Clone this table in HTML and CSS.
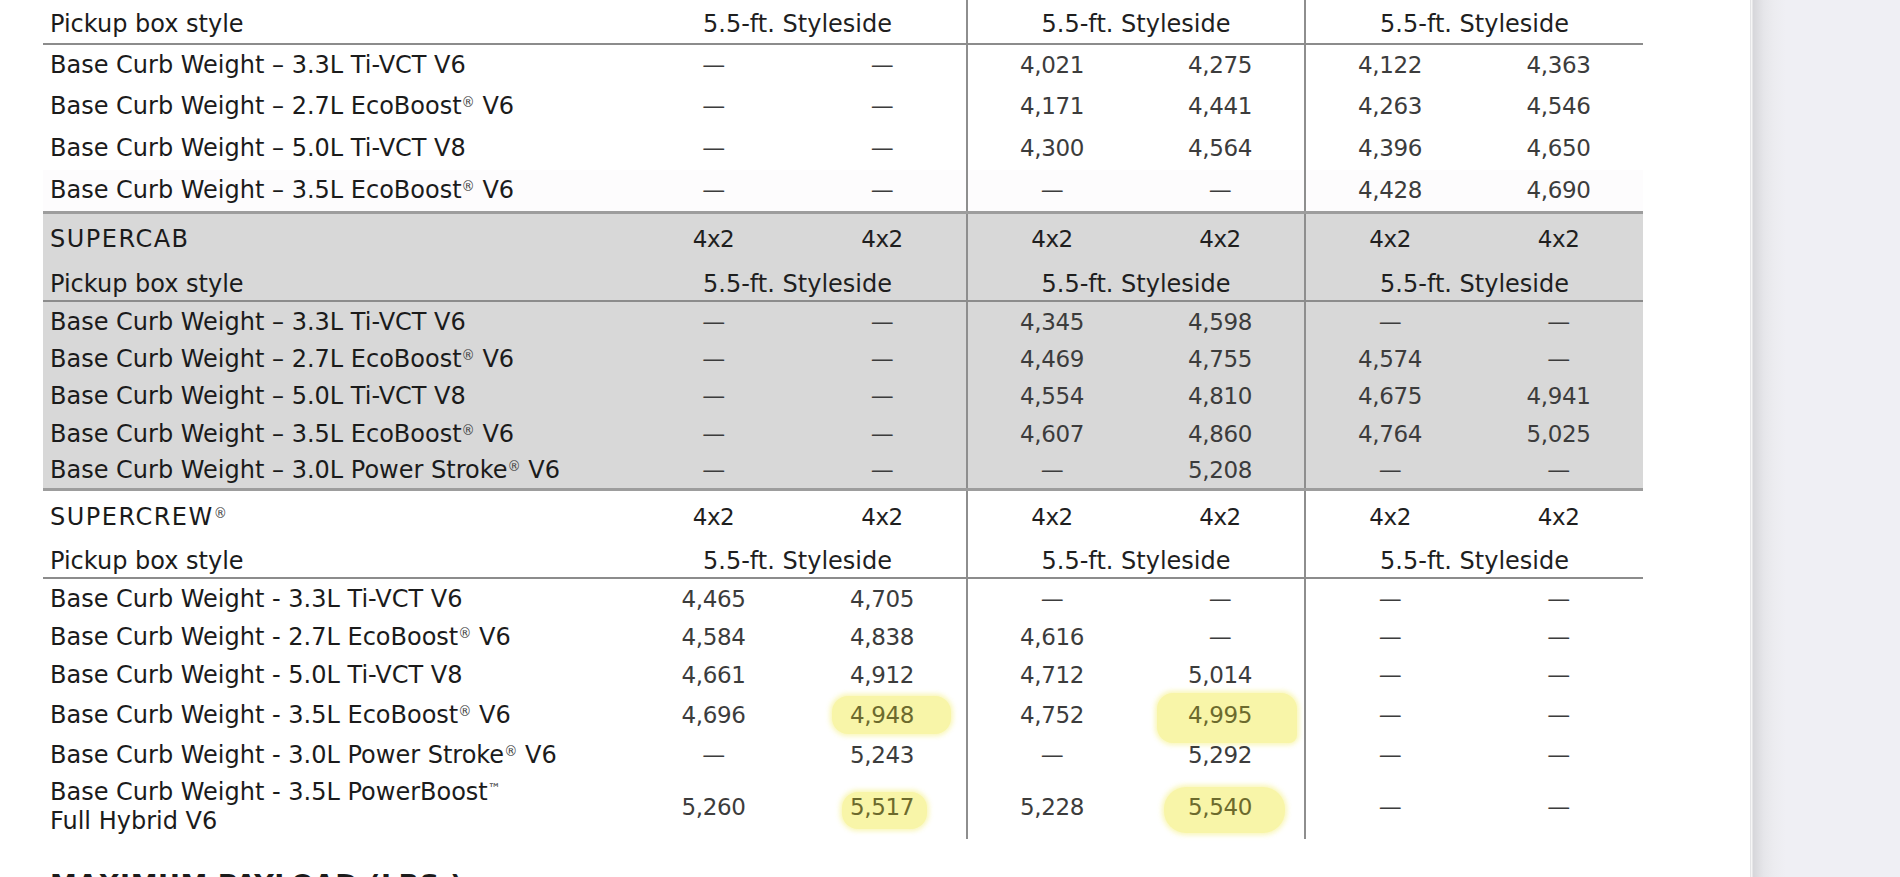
FILE: index.html
```html
<!DOCTYPE html>
<html lang="en">
<head>
<meta charset="utf-8">
<title>Curb Weight</title>
<link rel="stylesheet" href="styles.css">
</head>
<body>
<div class="page">
  <main class="doc">
    <table class="spec">
      <colgroup>
        <col class="c-lab">
        <col class="c-val"><col class="c-val"><col class="c-val"><col class="c-val"><col class="c-val"><col class="c-val">
      </colgroup>
      <tbody class="sec">
        <tr class="pickup top h44">
          <td class="l">Pickup box style</td>
          <td class="n" colspan="2">5.5-ft. Styleside</td>
          <td class="n g" colspan="2">5.5-ft. Styleside</td>
          <td class="n g" colspan="2">5.5-ft. Styleside</td>
        </tr>
        <tr class="h41">
          <td class="l">Base Curb Weight – 3.3L Ti-VCT V6</td>
          <td class="n">—</td><td class="n">—</td>
          <td class="n g">4,021</td><td class="n">4,275</td>
          <td class="n g">4,122</td><td class="n">4,363</td>
        </tr>
        <tr class="h42">
          <td class="l">Base Curb Weight – 2.7L EcoBoost<sup>®</sup> V6</td>
          <td class="n">—</td><td class="n">—</td>
          <td class="n g">4,171</td><td class="n">4,441</td>
          <td class="n g">4,263</td><td class="n">4,546</td>
        </tr>
        <tr class="h43">
          <td class="l">Base Curb Weight – 5.0L Ti-VCT V8</td>
          <td class="n">—</td><td class="n">—</td>
          <td class="n g">4,300</td><td class="n">4,564</td>
          <td class="n g">4,396</td><td class="n">4,650</td>
        </tr>
        <tr class="h42 tint">
          <td class="l">Base Curb Weight – 3.5L EcoBoost<sup>®</sup> V6</td>
          <td class="n">—</td><td class="n">—</td>
          <td class="n g">—</td><td class="n">—</td>
          <td class="n g">4,428</td><td class="n">4,690</td>
        </tr>
      </tbody>
      <tbody class="sec grey">
        <tr class="cab h50">
          <td class="l">SUPERCAB</td>
          <td class="n">4x2</td><td class="n">4x2</td>
          <td class="n g">4x2</td><td class="n">4x2</td>
          <td class="n g">4x2</td><td class="n">4x2</td>
        </tr>
        <tr class="pickup h39">
          <td class="l">Pickup box style</td>
          <td class="n" colspan="2">5.5-ft. Styleside</td>
          <td class="n g" colspan="2">5.5-ft. Styleside</td>
          <td class="n g" colspan="2">5.5-ft. Styleside</td>
        </tr>
        <tr class="h38 data">
          <td class="l">Base Curb Weight – 3.3L Ti-VCT V6</td>
          <td class="n">—</td><td class="n">—</td>
          <td class="n g">4,345</td><td class="n">4,598</td>
          <td class="n g">—</td><td class="n">—</td>
        </tr>
        <tr class="h37 data">
          <td class="l">Base Curb Weight – 2.7L EcoBoost<sup>®</sup> V6</td>
          <td class="n">—</td><td class="n">—</td>
          <td class="n g">4,469</td><td class="n">4,755</td>
          <td class="n g">4,574</td><td class="n">—</td>
        </tr>
        <tr class="h38 data">
          <td class="l">Base Curb Weight – 5.0L Ti-VCT V8</td>
          <td class="n">—</td><td class="n">—</td>
          <td class="n g">4,554</td><td class="n">4,810</td>
          <td class="n g">4,675</td><td class="n">4,941</td>
        </tr>
        <tr class="h37 data">
          <td class="l">Base Curb Weight – 3.5L EcoBoost<sup>®</sup> V6</td>
          <td class="n">—</td><td class="n">—</td>
          <td class="n g">4,607</td><td class="n">4,860</td>
          <td class="n g">4,764</td><td class="n">5,025</td>
        </tr>
        <tr class="h38 data">
          <td class="l">Base Curb Weight – 3.0L Power Stroke<sup>®</sup> V6</td>
          <td class="n">—</td><td class="n">—</td>
          <td class="n g">—</td><td class="n">5,208</td>
          <td class="n g">—</td><td class="n">—</td>
        </tr>
      </tbody>
      <tbody class="sec">
        <tr class="cab h51">
          <td class="l">SUPERCREW<sup>®</sup></td>
          <td class="n">4x2</td><td class="n">4x2</td>
          <td class="n g">4x2</td><td class="n">4x2</td>
          <td class="n g">4x2</td><td class="n">4x2</td>
        </tr>
        <tr class="pickup h38">
          <td class="l">Pickup box style</td>
          <td class="n" colspan="2">5.5-ft. Styleside</td>
          <td class="n g" colspan="2">5.5-ft. Styleside</td>
          <td class="n g" colspan="2">5.5-ft. Styleside</td>
        </tr>
        <tr class="h41">
          <td class="l">Base Curb Weight - 3.3L Ti-VCT V6</td>
          <td class="n">4,465</td><td class="n">4,705</td>
          <td class="n g">—</td><td class="n">—</td>
          <td class="n g">—</td><td class="n">—</td>
        </tr>
        <tr class="h37">
          <td class="l">Base Curb Weight - 2.7L EcoBoost<sup>®</sup> V6</td>
          <td class="n">4,584</td><td class="n">4,838</td>
          <td class="n g">4,616</td><td class="n">—</td>
          <td class="n g">—</td><td class="n">—</td>
        </tr>
        <tr class="h39">
          <td class="l">Base Curb Weight - 5.0L Ti-VCT V8</td>
          <td class="n">4,661</td><td class="n">4,912</td>
          <td class="n g">4,712</td><td class="n">5,014</td>
          <td class="n g">—</td><td class="n">—</td>
        </tr>
        <tr class="h40">
          <td class="l">Base Curb Weight - 3.5L EcoBoost<sup>®</sup> V6</td>
          <td class="n">4,696</td><td class="n"><span class="hl hl-a">4,948</span></td>
          <td class="n g">4,752</td><td class="n"><span class="hl hl-b">4,995</span></td>
          <td class="n g">—</td><td class="n">—</td>
        </tr>
        <tr class="h40">
          <td class="l">Base Curb Weight - 3.0L Power Stroke<sup>®</sup> V6</td>
          <td class="n">—</td><td class="n">5,243</td>
          <td class="n g">—</td><td class="n">5,292</td>
          <td class="n g">—</td><td class="n">—</td>
        </tr>
        <tr class="h64 last">
          <td class="l wrap">Base Curb Weight - 3.5L PowerBoost<sup>™</sup><br>Full Hybrid V6</td>
          <td class="n">5,260</td><td class="n"><span class="hl hl-c">5,517</span></td>
          <td class="n g">5,228</td><td class="n"><span class="hl hl-d">5,540</span></td>
          <td class="n g">—</td><td class="n">—</td>
        </tr>
      </tbody>
    </table>
    <h2 class="next">MAXIMUM PAYLOAD (LBS.)</h2>
  </main>
  <aside class="side"></aside>
</div>
</body>
</html>
```
FILE: styles.css
```css
html, body {
  margin: 0;
  padding: 0;
  height: 877px;
  overflow: hidden;
  background: #ffffff;
}

body {
  font-family: "DejaVu Sans", "Open Sans", sans-serif;
  color: #1c1c1c;
}

.page {
  display: flex;
  height: 877px;
}

.doc {
  width: 1750px;
  flex: 0 0 1750px;
  padding: 0 0 0 43px;
  box-sizing: border-box;
  overflow: hidden;
}

.side {
  flex: 1;
  background: linear-gradient(to right,
    #e4e4e6 0, #e4e4e6 1px,
    #f6f6f6 1px, #f6f6f6 2px,
    #d6d6da 3px, #dcdce0 7px,
    #e6e6ea 14px, #ececf0 24px, #efeff4 36px);
}

.spec {
  width: 1600px;
  table-layout: fixed;
  border-collapse: collapse;
  font-size: 24px;
}

.c-lab { width: 586px; }
.c-val { width: 169px; }

.spec td {
  padding: 0;
  vertical-align: middle;
  white-space: nowrap;
  line-height: 29px;
}

.spec td.l {
  text-align: left;
  padding-left: 7px;
  color: #1b1b1b;
}

.spec td.n {
  text-align: center;
  color: #3c3c3c;
  font-size: 23px;
  letter-spacing: -0.4px;
}

.spec td.g {
  border-left: 2px solid #8e8e8e;
}

.spec sup {
  font-size: 0.55em;
  line-height: 0;
  vertical-align: 0.55em;
  color: #444;
  letter-spacing: 0;
}

.pickup td.n {
  color: #1f1f1f;
  font-size: 24px;
  letter-spacing: 0;
}

.cab td.n {
  color: #1f1f1f;
}

.cab td.l {
  letter-spacing: 1.5px;
}

.pickup td {
  border-bottom: 2px solid #8c8c8c;
}

.sec + .sec tr:first-child td {
  border-top: 3px solid #9d9d9d;
}

.grey td {
  background: #d8d8d8;
}

.grey .data td {
  padding-top: 3px;
}

.tint td {
  background: #fdfcfd;
}

.cab td {
  padding-top: 4px;
}

.pickup td {
  padding-top: 6px;
}

.h37 { height: 37px; }
.h38 { height: 38px; }
.h39 { height: 39px; }
.h40 { height: 40px; }
.h41 { height: 41px; }
.h42 { height: 42px; }
.h43 { height: 43px; }
.h44 { height: 44px; }
.h50 { height: 50px; }
.h51 { height: 51px; }
.h64 { height: 64px; }

.hl {
  display: inline-block;
  background: #f8f5a8;
  color: #6c6a2d;
  border-radius: 16px;
  box-shadow: 0 0 5px 2px rgba(248, 245, 168, 0.85);
  line-height: 29px;
}

.hl-a { padding: 5px 37px 4px 18px; margin: -5px 0 -4px 19px; }
.hl-b { padding: 8px 45px 13px 31px; margin: -8px 0 -13px 14px; border-bottom-right-radius: 8px; }
.hl-c { padding: 1px 13px 7px 8px; margin: -1px 0 -7px 5px; }
.hl-d { padding: 6px 33px 11px 24px; margin: -6px 0 -11px 9px; border-radius: 22px; }

.next {
  margin: 30px 0 0 7px;
  font-size: 27px;
  line-height: normal;
  font-weight: 700;
  color: #1b1b1b;
  letter-spacing: 0.5px;
}
```
